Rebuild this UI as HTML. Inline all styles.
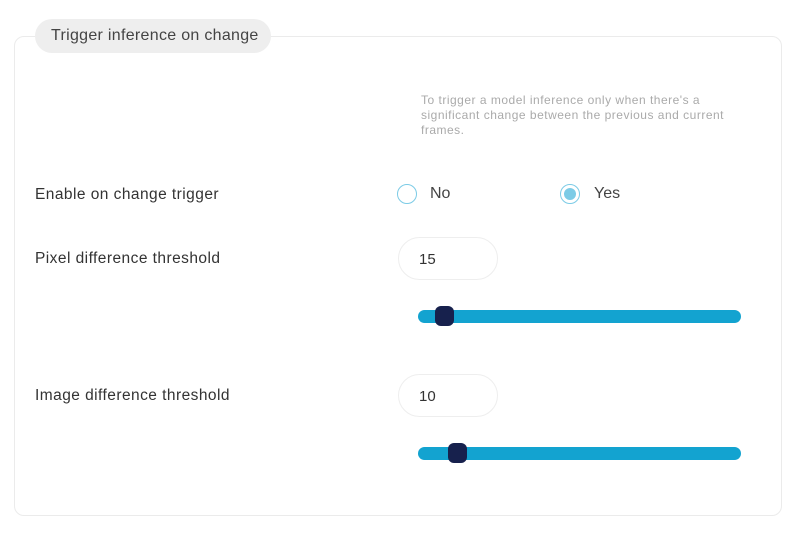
<!DOCTYPE html>
<html><head><meta charset="utf-8"><style>
html,body{margin:0;padding:0;background:#fff;width:794px;height:534px;overflow:hidden;font-family:"Liberation Sans",sans-serif;color:#333;}
.box{position:absolute;left:14px;top:36px;width:766px;height:478px;border:1px solid #ebebeb;border-radius:10px;}
.legend{position:absolute;left:35px;top:19px;width:236px;height:34px;background:#eee;border-radius:17px;font-size:16px;line-height:34px;text-indent:16px;color:#444;letter-spacing:0.3px;}
.help{position:absolute;left:421px;top:93px;width:318px;font-size:12px;line-height:15px;color:#aaa;letter-spacing:0.5px;}
.lbl{position:absolute;left:35px;font-size:15.5px;color:#333;letter-spacing:0.45px;}
.radio{position:absolute;top:184px;width:18px;height:18px;border:1.5px solid #7ccbe6;border-radius:50%;}
.radio.on::after{content:"";position:absolute;left:3px;top:3px;width:12px;height:12px;border-radius:50%;background:#7ccbe6;}
.rl{position:absolute;top:185px;font-size:16px;color:#444;}
.inp{position:absolute;left:398px;width:100px;height:43px;border:1px solid #eee;border-radius:22px;font-size:15px;line-height:43px;text-indent:20px;color:#333;box-sizing:border-box;}
.track{position:absolute;left:418px;width:323px;height:13px;background:#13a3d0;border-radius:7px;}
.thumb{position:absolute;width:19px;height:20px;background:#17214d;border-radius:6px;}
</style></head><body>
<div class="box"></div>
<div class="legend">Trigger inference on change</div>
<div class="help">To trigger a model inference only when there's a significant change between the previous and current frames.</div>
<div class="lbl" style="top:186px">Enable on change trigger</div>
<div class="radio" style="left:397px"></div><div class="rl" style="left:430px">No</div>
<div class="radio on" style="left:560px"></div><div class="rl" style="left:594px">Yes</div>
<div class="lbl" style="top:250px">Pixel difference threshold</div>
<div class="inp" style="top:237px">15</div>
<div class="track" style="top:310px"></div>
<div class="thumb" style="left:435px;top:306px"></div>
<div class="lbl" style="top:387px">Image difference threshold</div>
<div class="inp" style="top:374px">10</div>
<div class="track" style="top:447px"></div>
<div class="thumb" style="left:448px;top:443px"></div>
</body></html>
